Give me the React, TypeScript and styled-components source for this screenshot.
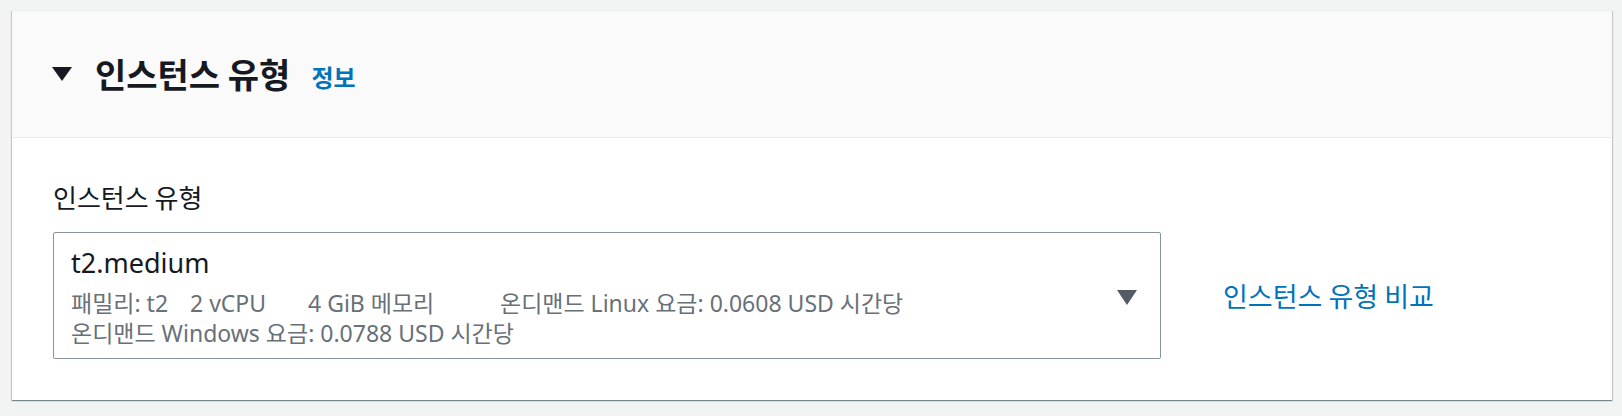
import React from "react";
import styled, { createGlobalStyle } from "styled-components";

const GlobalStyle = createGlobalStyle`
  html, body {
    margin: 0;
    padding: 0;
    background: #f2f3f3;
  }
  body {
    font-family: "Noto Sans", "Noto Sans CJK KR", sans-serif;
    color: #16191f;
  }
`;

const Page = styled.div`
  padding: 10px 10px 16px 12px;
`;

const Card = styled.section`
  width: 1600px;
  background: #ffffff;
  border-top: 1px solid #eaeded;
  box-shadow: 0 1px 1px 0 rgba(0, 28, 36, 0.3), 1px 1px 1px 0 rgba(0, 28, 36, 0.15),
    -1px 1px 1px 0 rgba(0, 28, 36, 0.15);
  box-sizing: border-box;
`;

const Header = styled.header`
  display: flex;
  align-items: center;
  height: 127px;
  padding-left: 40px;
  background: #fafafa;
  border-bottom: 1px solid #eaeded;
  box-sizing: border-box;
`;

const CaretBox = styled.span<{ $w: number; $h: number; $color: string }>`
  display: inline-flex;
  width: ${(p) => p.$w}px;
  height: ${(p) => p.$h}px;
  color: ${(p) => p.$color};
  flex: none;
`;

const TitleRow = styled.div`
  display: flex;
  align-items: baseline;
  margin-left: 23px;
  gap: 21px;
`;

const Title = styled.h2`
  margin: 0;
  font-family: "Noto Sans CJK KR", sans-serif;
  font-size: 34px;
  font-weight: 700;
  line-height: 42px;
  color: #16191f;
`;

const InfoLink = styled.a`
  font-family: "Noto Sans CJK KR", sans-serif;
  font-size: 24px;
  font-weight: 700;
  color: #0073bb;
  text-decoration: none;
  position: relative;
  top: -1px;
`;

const Body = styled.div`
  padding: 43px 41px 41px 41px;
`;

const Label = styled.label`
  display: block;
  font-family: "Noto Sans CJK KR", sans-serif;
  font-size: 26px;
  line-height: 32px;
  color: #16191f;
  margin-bottom: 19px;
`;

const FieldRow = styled.div`
  display: flex;
  align-items: center;
  gap: 62px;
`;

const Select = styled.div`
  display: flex;
  align-items: center;
  width: 1108px;
  box-sizing: border-box;
  border: 1px solid #879596;
  border-radius: 2px;
  padding: 13px 23px 10px 17px;
  background: #ffffff;
`;

const OptionText = styled.div`
  flex: 1;
  display: flex;
  flex-direction: column;
`;

const OptionTitle = styled.div`
  font-size: 27px;
  line-height: 34px;
  color: #16191f;
  margin-bottom: 8px;
`;

const Tags = styled.div`
  display: flex;
  flex-wrap: wrap;
`;

const Tag = styled.span<{ $w?: number }>`
  font-size: 23px;
  line-height: 30px;
  color: #687078;
  white-space: nowrap;
  ${(p) => (p.$w ? `width: ${p.$w}px; flex: none;` : "")}
`;

const CompareLink = styled.a`
  font-family: "Noto Sans CJK KR", sans-serif;
  font-size: 27px;
  line-height: 32px;
  color: #0073bb;
  text-decoration: none;
`;

const Caret = ({ w, h, color }: { w: number; h: number; color: string }) => (
  <CaretBox $w={w} $h={h} $color={color}>
    <svg width={w} height={h} viewBox={`0 0 ${w} ${h}`}>
      <polygon points={`0,0 ${w},0 ${w / 2},${h}`} fill="currentColor" />
    </svg>
  </CaretBox>
);

export default function App() {
  return (
    <>
      <GlobalStyle />
      <Page>
        <Card>
          <Header>
            <Caret w={20} h={14} color="#16191f" />
            <TitleRow>
              <Title>인스턴스 유형</Title>
              <InfoLink href="#">정보</InfoLink>
            </TitleRow>
          </Header>
          <Body>
            <Label>인스턴스 유형</Label>
            <FieldRow>
              <Select>
                <OptionText>
                  <OptionTitle>t2.medium</OptionTitle>
                  <Tags>
                    <Tag $w={119}>패밀리: t2</Tag>
                    <Tag $w={118}>2 vCPU</Tag>
                    <Tag $w={192}>4 GiB 메모리</Tag>
                    <Tag $w={520}>온디맨드 Linux 요금: 0.0608 USD 시간당</Tag>
                    <Tag>온디맨드 Windows 요금: 0.0788 USD 시간당</Tag>
                  </Tags>
                </OptionText>
                <Caret w={20} h={15} color="#545b64" />
              </Select>
              <CompareLink href="#">인스턴스 유형 비교</CompareLink>
            </FieldRow>
          </Body>
        </Card>
      </Page>
    </>
  );
}
